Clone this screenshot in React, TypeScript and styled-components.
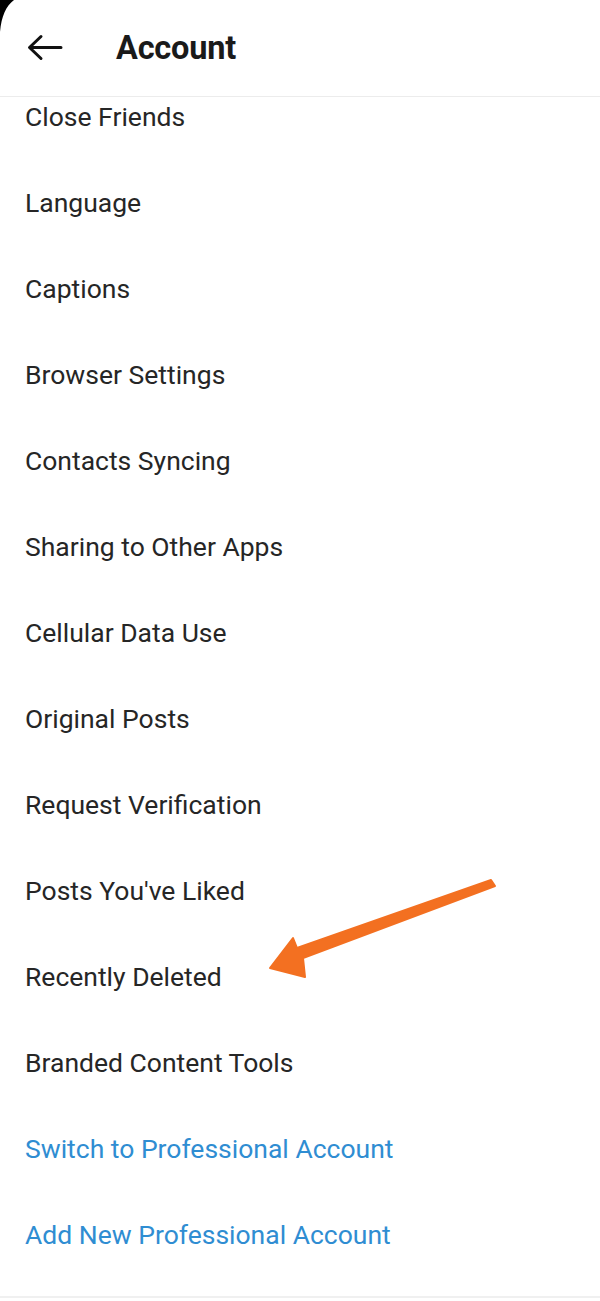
import React from 'react';
import styled, { createGlobalStyle } from 'styled-components';

const GlobalStyle = createGlobalStyle`
  html, body {
    margin: 0;
    padding: 0;
    background: #ffffff;
  }
  body {
    font-family: Roboto, "Liberation Sans", Arial, sans-serif;
  }
`;

const items = [
  'Close Friends',
  'Language',
  'Captions',
  'Browser Settings',
  'Contacts Syncing',
  'Sharing to Other Apps',
  'Cellular Data Use',
  'Original Posts',
  'Request Verification',
  "Posts You've Liked",
  'Recently Deleted',
  'Branded Content Tools',
];

const links = ['Switch to Professional Account', 'Add New Professional Account'];

const Screen = styled.div`
  position: relative;
  width: 600px;
  height: 1301px;
  overflow: hidden;
  background: #ffffff;
`;

const Header = styled.header`
  position: relative;
  z-index: 2;
  display: flex;
  align-items: center;
  height: 96px;
  background: #ffffff;
  border-bottom: 1px solid #ececec;
`;

const BackButton = styled.div`
  display: flex;
  align-items: center;
  justify-content: center;
  width: 44px;
  height: 44px;
  margin-left: 22px;
  margin-right: 50px;
`;

const Title = styled.h1`
  margin: 0;
  font-size: 32.5px;
  font-weight: 700;
  color: #1a1a1a;
  letter-spacing: -0.2px;
`;

const List = styled.ul`
  list-style: none;
  margin: -24px 0 0;
  padding: 0;
`;

const Row = styled.li<{ $link?: boolean }>`
  display: flex;
  align-items: center;
  height: 86px;
  padding-left: 25px;
  font-size: 26.5px;
  color: ${(p) => (p.$link ? '#2f8dd2' : '#262626')};
`;

const Divider = styled.div`
  margin-top: 19px;
  height: 2px;
  background: #f0f0f0;
`;

const Corner = styled.svg`
  position: absolute;
  top: 0;
  left: 0;
  z-index: 3;
`;

const Pointer = styled.svg`
  position: absolute;
  top: 870px;
  left: 255px;
  z-index: 3;
`;

export default function App() {
  return (
    <>
      <GlobalStyle />
      <Screen>
        <Header>
          <BackButton>
            <svg width="40" height="40" viewBox="0 0 40 40">
              <path
                d="M37 17.5H7M17 6.5L5.5 17.5L17 28.5"
                fill="none"
                stroke="#111"
                strokeWidth="3"
                strokeLinecap="round"
                strokeLinejoin="round"
                transform="translate(0 2)"
              />
            </svg>
          </BackButton>
          <Title>Account</Title>
        </Header>
        <List>
          {items.map((label) => (
            <Row key={label}>{label}</Row>
          ))}
          {links.map((label) => (
            <Row key={label} $link>
              {label}
            </Row>
          ))}
        </List>
        <Divider />
        <Corner width="20" height="36" viewBox="0 0 20 36">
          <path d="M0 0H14C6 6 1.5 16 0 32Z" fill="#000" />
        </Corner>
        <Pointer width="250" height="120" viewBox="0 0 250 120">
          <path
            d="M236 10L240 16L48 88L50 107L15 98L38 68L42 78Z"
            fill="#f37021"
            stroke="#f37021"
            strokeWidth="2"
            strokeLinejoin="round"
          />
        </Pointer>
      </Screen>
    </>
  );
}
